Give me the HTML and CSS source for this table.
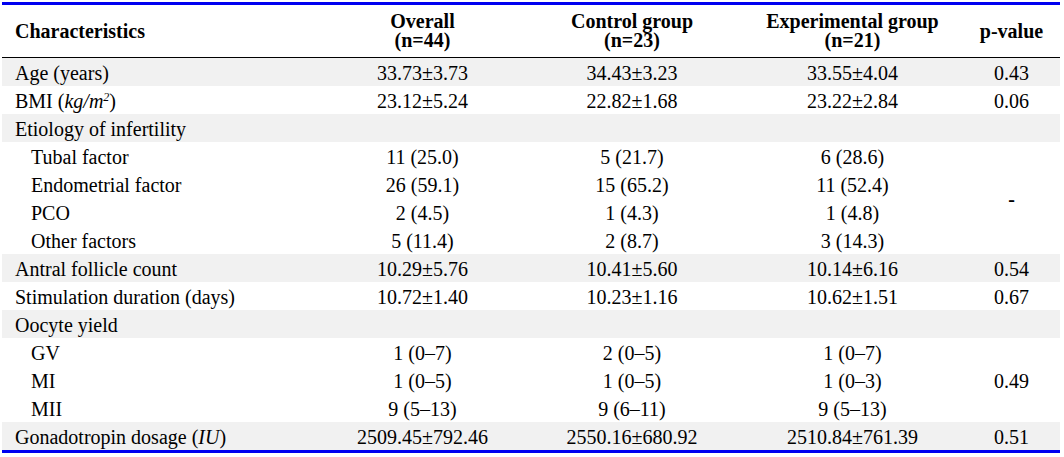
FILE: index.html
```html
<!DOCTYPE html>
<html>
<head>
<meta charset="utf-8">
<link rel="stylesheet" href="styles.css">
</head>
<body>
<table class="tbl">
  <colgroup>
    <col class="c1"><col class="c2"><col class="c3"><col class="c4"><col class="c5">
  </colgroup>
  <thead>
    <tr class="head">
      <th class="left">Characteristics</th>
      <th><span class="hl">Overall</span><span class="hl">(n=44)</span></th>
      <th><span class="hl">Control group</span><span class="hl">(n=23)</span></th>
      <th><span class="hl">Experimental group</span><span class="hl">(n=21)</span></th>
      <th>p-value</th>
    </tr>
  </thead>
  <tbody>
    <tr class="grey"><td class="left">Age (years)</td><td>33.73±3.73</td><td>34.43±3.23</td><td>33.55±4.04</td><td>0.43</td></tr>
    <tr><td class="left">BMI (<i>kg/m<sup>2</sup></i>)</td><td>23.12±5.24</td><td>22.82±1.68</td><td>23.22±2.84</td><td>0.06</td></tr>
    <tr class="grey"><td class="left">Etiology of infertility</td><td></td><td></td><td></td><td></td></tr>
    <tr><td class="sub">Tubal factor</td><td>11 (25.0)</td><td>5 (21.7)</td><td>6 (28.6)</td><td rowspan="4" class="dash">-</td></tr>
    <tr><td class="sub">Endometrial factor</td><td>26 (59.1)</td><td>15 (65.2)</td><td>11 (52.4)</td></tr>
    <tr><td class="sub">PCO</td><td>2 (4.5)</td><td>1 (4.3)</td><td>1 (4.8)</td></tr>
    <tr><td class="sub">Other factors</td><td>5 (11.4)</td><td>2 (8.7)</td><td>3 (14.3)</td></tr>
    <tr class="grey"><td class="left">Antral follicle count</td><td>10.29±5.76</td><td>10.41±5.60</td><td>10.14±6.16</td><td>0.54</td></tr>
    <tr><td class="left">Stimulation duration (days)</td><td>10.72±1.40</td><td>10.23±1.16</td><td>10.62±1.51</td><td>0.67</td></tr>
    <tr class="grey"><td class="left">Oocyte yield</td><td></td><td></td><td></td><td></td></tr>
    <tr><td class="sub">GV</td><td>1 (0–7)</td><td>2 (0–5)</td><td>1 (0–7)</td><td rowspan="3">0.49</td></tr>
    <tr><td class="sub">MI</td><td>1 (0–5)</td><td>1 (0–5)</td><td>1 (0–3)</td></tr>
    <tr><td class="sub">MII</td><td>9 (5–13)</td><td>9 (6–11)</td><td>9 (5–13)</td></tr>
    <tr class="grey"><td class="left">Gonadotropin dosage (<i>IU</i>)</td><td>2509.45±792.46</td><td>2550.16±680.92</td><td>2510.84±761.39</td><td>0.51</td></tr>
  </tbody>
</table>
</body>
</html>
```

FILE: styles.css
```css
html, body {
  margin: 0;
  padding: 0;
  background: #fff;
}

body {
  padding: 2px 0 0 2px;
}

.tbl {
  width: 1058px;
  table-layout: fixed;
  border-collapse: separate;
  border-spacing: 0;
  border-top: 3px solid #0000f0;
  border-bottom: 3px solid #0000f0;
  font-family: "Liberation Serif", "Times New Roman", serif;
  font-size: 20px;
  color: #000;
}

.c1 { width: 321px; }
.c2 { width: 199px; }
.c3 { width: 220px; }
.c4 { width: 221px; }
.c5 { width: 97px; }

.tbl th,
.tbl td {
  box-sizing: border-box;
  padding: 0;
  text-align: center;
  vertical-align: middle;
}

.head th {
  height: 53px;
  border-bottom: 1px solid #000;
  font-weight: bold;
  line-height: 22px;
}

.hl {
  display: block;
  height: 19px;
  line-height: 19px;
}

.tbl td {
  height: 28px;
  line-height: 22px;
  padding-top: 1px;
}

.tbl .left {
  text-align: left;
  padding-left: 13px;
}

.tbl .sub {
  text-align: left;
  padding-left: 29px;
}

.grey td {
  background: #f1f1f1;
}

.dash {
  font-weight: bold;
}

sup {
  font-size: 12px;
  line-height: 0;
  vertical-align: 7px;
}
```
